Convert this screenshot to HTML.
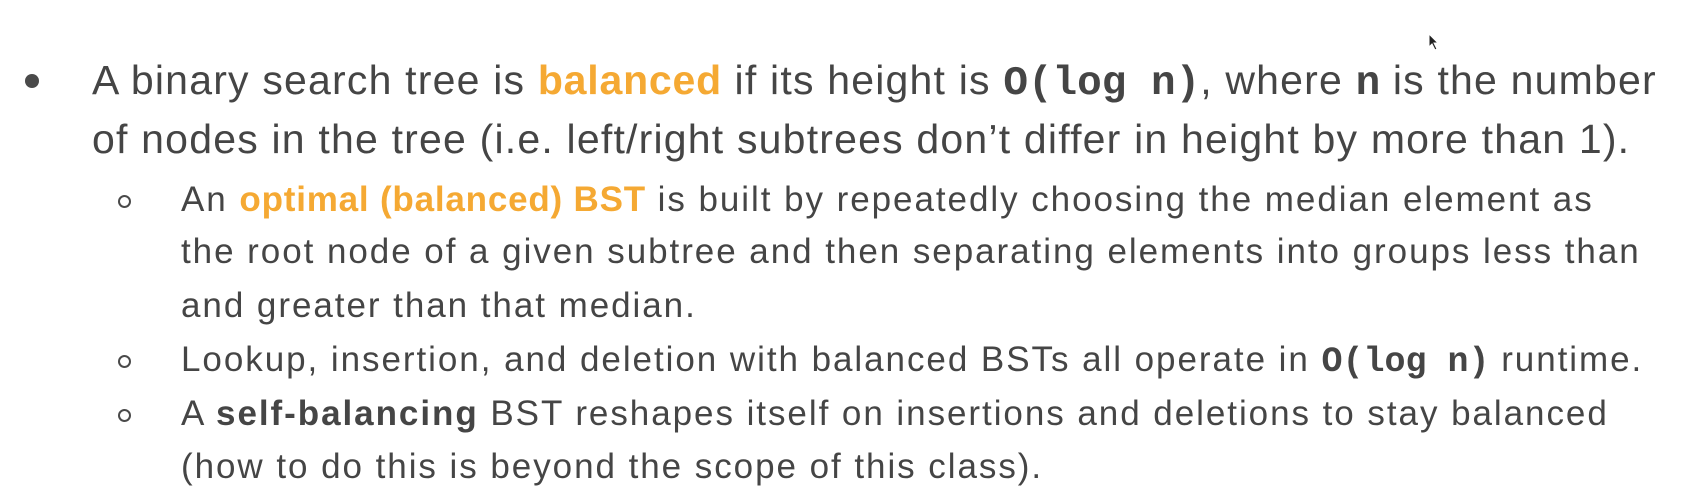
<!DOCTYPE html>
<html><head><meta charset="utf-8"><style>
body{margin:0;width:1694px;height:499px;background:#fff;overflow:hidden;font-family:"Liberation Sans",sans-serif;color:#454545;position:relative}
.l{position:absolute;white-space:nowrap;line-height:1;}
.a{font-size:41px;left:92px;letter-spacing:1.2px}
.b{font-size:35px;left:181px;letter-spacing:1.95px}
.o{color:#f5a933;font-weight:bold;letter-spacing:0.8px}
.m{font-family:"Liberation Mono",monospace;font-weight:bold;letter-spacing:0}
.dot{position:absolute;width:14px;height:14px;border-radius:50%;background:#4a4a4a}
.c{position:absolute;width:9px;height:9px;border-radius:50%;border:2px solid #4a4a4a}
</style></head><body>
<div class="dot" style="left:25px;top:74px"></div>
<div class="l a" style="top:60px">A binary search tree is <span class="o">balanced</span> if its height is <span class="m">O(log n)</span>, where <span class="m">n</span> is the number</div>
<div class="l a" style="top:119px">of nodes in the tree (i.e. left/right subtrees don’t differ in height by more than 1).</div>
<div class="c" style="left:118px;top:195px"></div>
<div class="l b" style="top:182px">An <span class="o">optimal (balanced) BST</span> is built by repeatedly choosing the median element as</div>
<div class="l b" style="top:234px">the root node of a given subtree and then separating elements into groups less than</div>
<div class="l b" style="top:288px">and greater than that median.</div>
<div class="c" style="left:118px;top:355px"></div>
<div class="l b" style="top:342px">Lookup, insertion, and deletion with balanced BSTs all operate in <span class="m">O(log n)</span> runtime.</div>
<div class="c" style="left:118px;top:409px"></div>
<div class="l b" style="top:396px">A <b>self-balancing</b> BST reshapes itself on insertions and deletions to stay balanced</div>
<div class="l b" style="top:449px">(how to do this is beyond the scope of this class).</div>
<svg style="position:absolute;left:1428px;top:33px" width="12" height="18"><path d="M1 1 L1 14 L4 11 L7 17 L9 16 L6 10 L10 10 Z" fill="#222" stroke="#fff" stroke-width="1"/></svg>
</body></html>
